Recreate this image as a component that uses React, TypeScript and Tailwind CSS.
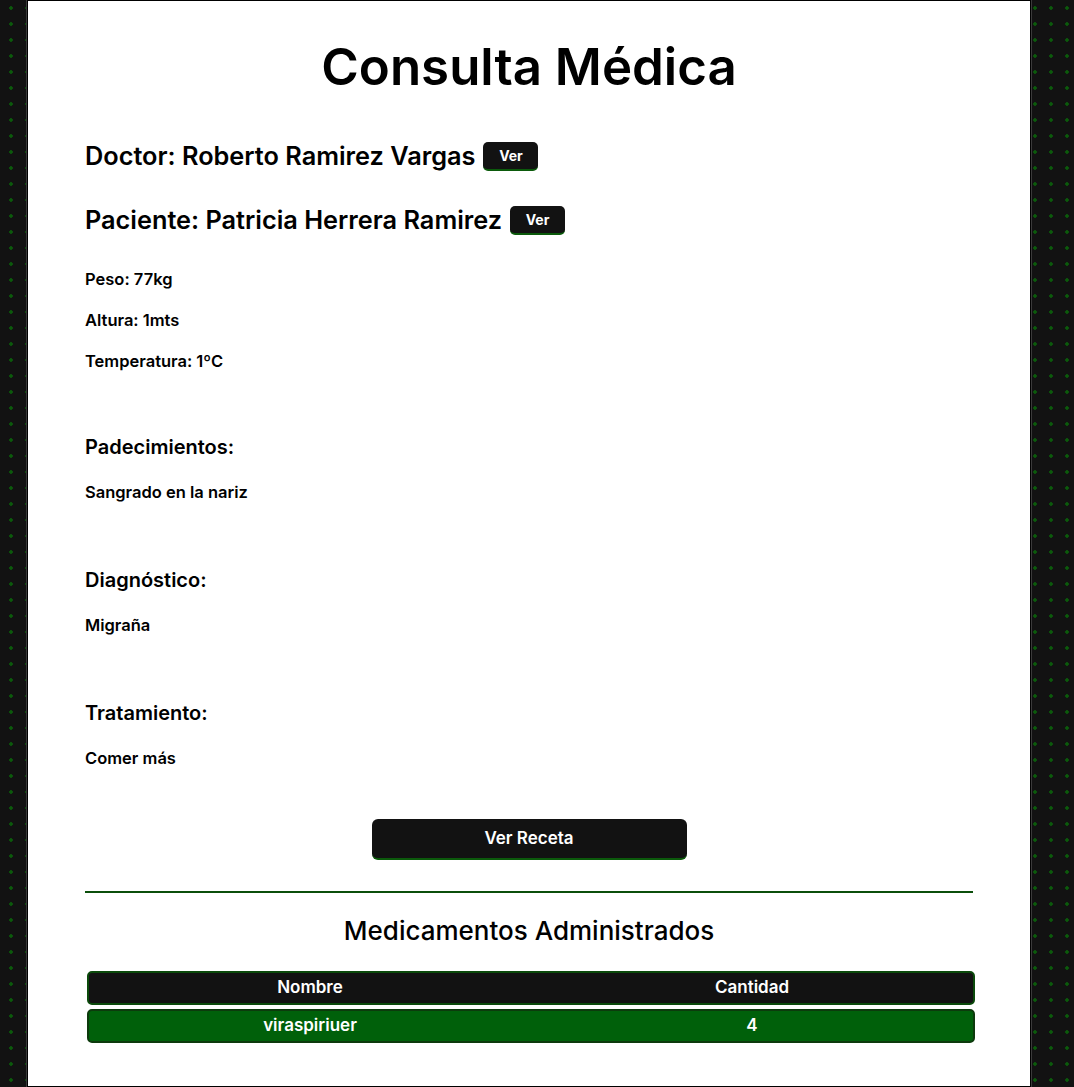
const font = { fontFamily: '"Inter", "Liberation Sans", sans-serif' };

function VerButton() {
  return (
    <button className="ml-2 h-[29px] w-[55px] rounded-[5px] border-b-2 border-[#0b5a0b] bg-[#121212] text-[14px] font-bold text-white">
      Ver
    </button>
  );
}

export default function App() {
  const datos = ["Peso: 77kg", "Altura: 1mts", "Temperatura: 1ºC"];
  const secciones = [
    { titulo: "Padecimientos:", texto: "Sangrado en la nariz" },
    { titulo: "Diagnóstico:", texto: "Migraña" },
    { titulo: "Tratamiento:", texto: "Comer más" },
  ];

  return (
    <div
      style={font}
      className="min-h-screen bg-[#121212] bg-[radial-gradient(circle,#0b5a0b_1.5px,transparent_2px)] bg-[length:16px_16px] bg-[position:3px_0px]"
    >
      <div className="ml-[27px] min-h-screen w-[1004px] border border-black bg-white px-[57px] pb-10 pt-[36px] text-black shadow-[0_0_0_1px_#3a3a3a]">
        <h1 className="text-center text-[51px] font-semibold leading-[60px]">Consulta Médica</h1>

        <div className="mt-[42px] flex h-[34px] items-center">
          <h2 className="text-[25.3px] font-semibold leading-[34px]">Doctor: Roberto Ramirez Vargas</h2>
          <VerButton />
        </div>
        <div className="mt-[30px] flex h-[34px] items-center">
          <h2 className="text-[25.3px] font-semibold leading-[34px]">Paciente: Patricia Herrera Ramirez</h2>
          <VerButton />
        </div>

        <div className="mt-[30px] flex flex-col gap-[17px]">
          {datos.map((d) => (
            <p key={d} className="text-[16.5px] font-semibold leading-[24px]">
              {d}
            </p>
          ))}
        </div>

        <div className="mt-[60px] flex flex-col gap-[62px]">
          {secciones.map((s) => (
            <div key={s.titulo}>
              <h3 className="text-[20px] font-semibold leading-[28px]">{s.titulo}</h3>
              <p className="mt-[19px] text-[16.5px] font-semibold leading-[24px]">{s.texto}</p>
            </div>
          ))}
        </div>

        <div className="mt-[49px] flex justify-center">
          <button className="h-[41px] w-[315px] rounded-[6px] border-b-2 border-[#0b5a0b] bg-[#121212] text-[17px] font-semibold text-white">
            Ver Receta
          </button>
        </div>

        <hr className="mt-[31px] border-t-2 border-[#0b4f0b]" />

        <h2 className="mt-[21px] text-center text-[26px] font-medium leading-[34px]">Medicamentos Administrados</h2>

        <div className="ml-[2px] mt-[23px] flex w-[888px] flex-col gap-[4px]">
          <div className="grid h-[34px] grid-cols-2 items-center rounded-[5px] border-2 border-[#0b4a0b] bg-[#121212] text-[17px] font-semibold text-white">
            <span className="text-center">Nombre</span>
            <span className="text-center">Cantidad</span>
          </div>
          <div className="grid h-[34px] grid-cols-2 items-center rounded-[5px] border-2 border-[#0d3a0d] bg-[#00600a] text-[17px] font-semibold text-white">
            <span className="text-center">viraspiriuer</span>
            <span className="text-center">4</span>
          </div>
        </div>
      </div>
    </div>
  );
}
